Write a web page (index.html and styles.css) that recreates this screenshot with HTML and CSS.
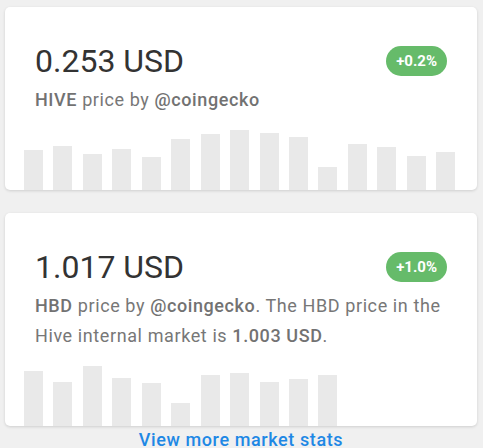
FILE: index.html
```html
<!DOCTYPE html>
<html lang="en">
<head>
<meta charset="utf-8">
<title>Market stats</title>
<link rel="stylesheet" href="styles.css">
</head>
<body>
<main class="page">
  <section class="card">
    <div class="card-body">
      <div class="price-row">
        <div class="price">0.253 USD</div>
        <span class="badge">+0.2%</span>
      </div>
      <p class="desc"><b>HIVE</b> price by <b>@coingecko</b></p>
    </div>
    <div class="chart">
      <span class="bar" style="height:40px"></span>
      <span class="bar" style="height:44px"></span>
      <span class="bar" style="height:36px"></span>
      <span class="bar" style="height:41px"></span>
      <span class="bar" style="height:33px"></span>
      <span class="bar" style="height:51px"></span>
      <span class="bar" style="height:56px"></span>
      <span class="bar" style="height:60px"></span>
      <span class="bar" style="height:57px"></span>
      <span class="bar" style="height:53px"></span>
      <span class="bar" style="height:23px"></span>
      <span class="bar" style="height:46px"></span>
      <span class="bar" style="height:43px"></span>
      <span class="bar" style="height:34px"></span>
      <span class="bar" style="height:38px"></span>
    </div>
  </section>
  <section class="card">
    <div class="card-body">
      <div class="price-row">
        <div class="price">1.017 USD</div>
        <span class="badge">+1.0%</span>
      </div>
      <p class="desc"><b>HBD</b> price by <b>@coingecko</b>. The HBD price in the Hive internal market is <b>1.003 USD</b>.</p>
    </div>
    <div class="chart">
      <span class="bar" style="height:55px"></span>
      <span class="bar" style="height:44px"></span>
      <span class="bar" style="height:60px"></span>
      <span class="bar" style="height:48px"></span>
      <span class="bar" style="height:43px"></span>
      <span class="bar" style="height:23px"></span>
      <span class="bar" style="height:51px"></span>
      <span class="bar" style="height:53px"></span>
      <span class="bar" style="height:44px"></span>
      <span class="bar" style="height:47px"></span>
      <span class="bar" style="height:51px"></span>
    </div>
  </section>
  <a class="more" href="#">View more market stats</a>
</main>
</body>
</html>
```

FILE: styles.css
```css
html, body {
  margin: 0;
  padding: 0;
  background: #f0f0f0;
}
body {
  font-family: Roboto, "Noto Sans", Arial, sans-serif;
}
.page {
  width: 472px;
  padding: 7px 0 0 5px;
  display: flex;
  flex-direction: column;
  gap: 23px;
}
.card {
  background: #fff;
  border-radius: 5px;
  box-shadow: 0 1px 3px rgba(0, 0, 0, 0.14);
  display: flex;
  flex-direction: column;
  overflow: hidden;
}
.card-body {
  padding: 34px 30px 0;
}
.price-row {
  display: flex;
  align-items: center;
  justify-content: space-between;
}
.price {
  font-size: 32px;
  line-height: 40px;
  color: #333;
  font-weight: 400;
}
.badge {
  background: #66bb6a;
  color: #fff;
  font-size: 15px;
  font-weight: 700;
  height: 30px;
  line-height: 30px;
  padding: 0 10px;
  border-radius: 15px;
}
.desc {
  margin: 4px 0 0;
  font-size: 18px;
  line-height: 30px;
  letter-spacing: 0.6px;
  color: #777;
}
.desc b {
  font-weight: 500;
  color: #727272;
}
.chart {
  margin-top: 15px;
  height: 60px;
  padding: 0 19px;
  display: flex;
  align-items: flex-end;
  gap: 10.45px;
}
.bar {
  flex: none;
  width: 19px;
  background: #e9e9e9;
}
.more {
  align-self: center;
  margin-top: -21px;
  font-size: 18px;
  line-height: 24px;
  font-weight: 500;
  letter-spacing: 0.6px;
  color: #1e88e5;
  text-decoration: none;
}
```
